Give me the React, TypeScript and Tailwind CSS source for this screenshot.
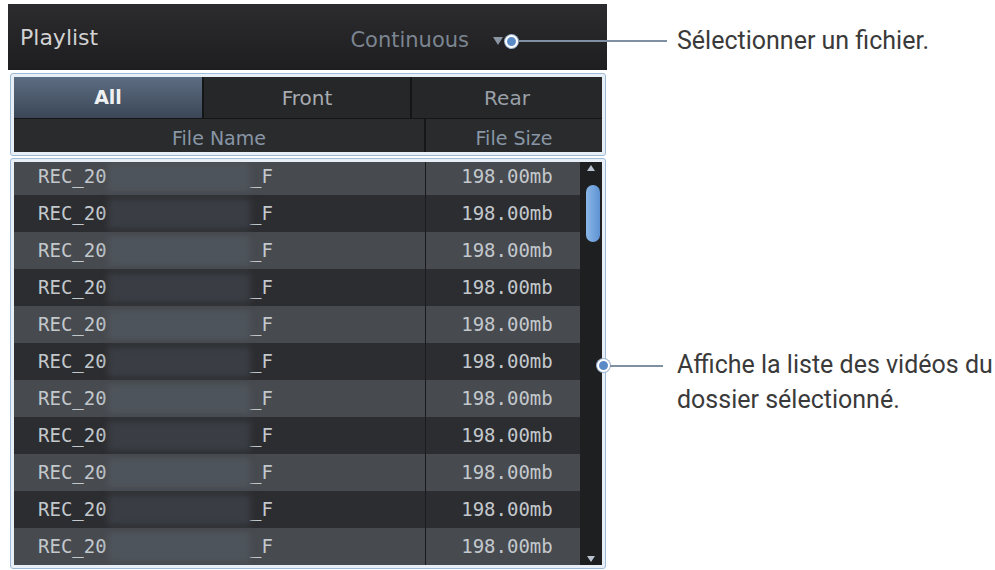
const rows = Array.from({ length: 11 }, (_, i) => i);

function Row({ index }: { index: number }) {
  const light = index % 2 === 0;
  return (
    <div
      className={`flex h-[37px] shrink-0 ${light ? "bg-[#474a4f]" : "bg-[#2c2d30]"} ${index === 0 ? "-mt-[4px]" : ""}`}
    >
      <div className="flex w-[411px] items-center font-['DejaVu_Sans_Mono',monospace] text-[19px] text-[#c3c8cd]">
        <span className="w-[94px] pl-6">REC_20</span>
        <div
          className={`h-[30px] w-[142px] blur-[3px] ${light ? "bg-[#4e545b]" : "bg-[#3a3e44]"}`}
        />
        <span>_F</span>
      </div>
      <div className="w-px bg-[#1a1b1d]" />
      <div className="flex flex-1 items-center justify-center pl-2 font-['DejaVu_Sans_Mono',monospace] text-[19px] text-[#c3c8cd]">
        198.00mb
      </div>
    </div>
  );
}

function Dot() {
  return (
    <div className="h-[13px] w-[13px] shrink-0 rounded-full border-[2px] border-white bg-[#5b8bc6] shadow-[0_0_0_1px_#9bb4cf]" />
  );
}

export default function App() {
  return (
    <div className="relative h-[570px] w-[995px] overflow-hidden bg-white font-['DejaVu_Sans',sans-serif]">
      <div className="ml-[8px] w-[599px] pt-[4px]">
        {/* title bar */}
        <div className="flex h-[66px] items-center bg-gradient-to-b from-[#2c2b2d] to-[#1e1d1f] pl-3 pr-[104px]">
          <span className="text-[22px] text-[#d2d2d2]">Playlist</span>
          <div className="ml-auto flex items-center pt-[8px]">
            <span className="text-[21px] text-[#7b8591]">Continuous</span>
            <span className="ml-[24px] h-0 w-0 border-x-[5px] border-t-[8px] border-x-transparent border-t-[#8a95a3]" />
          </div>
        </div>

        {/* tabs + column headers */}
        <div className="ml-[2px] mt-[3px] w-[596px] rounded-[3px] border border-[#9dbbd8] bg-[#e8eff6] p-[3px]">
          <div className="flex h-[41px] bg-[#141516]">
            <div className="flex w-[188px] items-center justify-center bg-gradient-to-b from-[#5d6d82] to-[#3b4757] text-[19px] font-bold text-[#eef0f2]">
              All
            </div>
            <div className="ml-[2px] flex w-[206px] items-center justify-center bg-[#262729] text-[20px] text-[#a8acb1]">
              Front
            </div>
            <div className="ml-[2px] flex w-[190px] items-center justify-center bg-[#262729] text-[20px] text-[#9aa0a8]">
              Rear
            </div>
          </div>
          <div className="flex h-[34px] border-t border-[#151617] bg-[#2a2b2d]">
            <div className="flex w-[410px] items-end justify-center text-[19px] text-[#8896a5]">
              File Name
            </div>
            <div className="w-[2px] bg-[#151617]" />
            <div className="flex flex-1 items-end justify-center text-[19px] text-[#8896a5]">
              File Size
            </div>
          </div>
        </div>

        {/* file list */}
        <div className="ml-[2px] mt-[2px] w-[596px] rounded-[3px] border border-[#9dbbd8] bg-[#e8eff6] p-[3px]">
          <div className="flex h-[403px] overflow-hidden bg-[#1f2022]">
            <div className="flex w-[566px] flex-col">
              {rows.map((i) => (
                <Row key={i} index={i} />
              ))}
            </div>
            <div className="flex flex-1 flex-col items-center bg-[#1e1f21]">
              <span className="mt-[3px] h-0 w-0 border-x-[4px] border-b-[6px] border-x-transparent border-b-[#b8c3cf]" />
              <div className="ml-[4px] mt-[14px] h-[57px] w-[14px] rounded-full bg-gradient-to-r from-[#8bb7e8] to-[#5e93d2]" />
              <span className="mb-[3px] mt-auto h-0 w-0 border-x-[4px] border-t-[6px] border-x-transparent border-t-[#b8c3cf]" />
            </div>
          </div>
        </div>
      </div>

      {/* callouts */}
      <div className="absolute left-[505px] top-[26px] flex h-[30px] items-center">
        <Dot />
        <div className="h-[2px] w-[149px] bg-[#7f90a3]" />
        <span className="ml-[10px] font-['Roboto',sans-serif] text-[25px] leading-[30px] text-[#3a3a3a]">
          Sélectionner un fichier.
        </span>
      </div>
      <div className="absolute left-[597px] top-[347px] flex items-start">
        <div className="mt-[12px] flex items-center">
          <Dot />
          <div className="h-[2px] w-[53px] bg-[#7f90a3]" />
        </div>
        <p className="ml-[14px] font-['Roboto',sans-serif] text-[25px] leading-[35px] text-[#3a3a3a]">
          Affiche la liste des vidéos du
          <br />
          dossier sélectionné.
        </p>
      </div>
    </div>
  );
}
